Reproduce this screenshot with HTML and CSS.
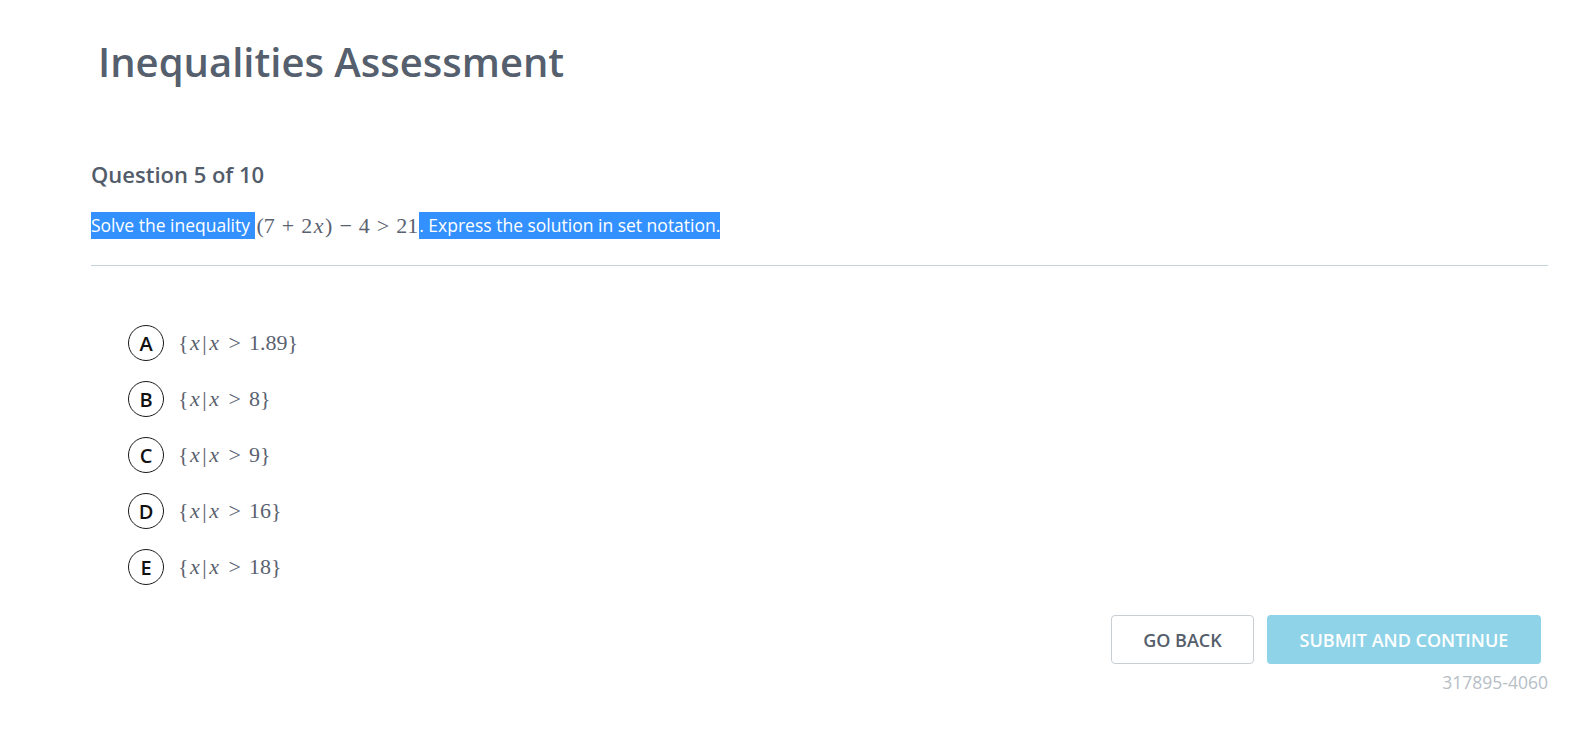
FILE: index.html
```html
<!DOCTYPE html>
<html lang="en">
<head>
<meta charset="utf-8">
<title>Inequalities Assessment</title>
<link rel="stylesheet" href="styles.css">
</head>
<body>
<div class="page">
  <h1 class="title">Inequalities Assessment</h1>
  <section class="question">
    <h2 class="q-count">Question 5 of 10</h2>
    <p class="q-text"><span class="sel">Solve the inequality </span><span class="math"><span>(</span><span>7</span><span class="op">+</span><span>2</span><i>x</i><span>)</span><span class="op">−</span><span>4</span><span class="op">&gt;</span><span>21</span></span><span class="sel">. Express the solution in set notation.</span></p>
  </section>
  <hr class="divider">
  <ul class="options">
    <li class="option"><span class="letter">A</span><span class="math">{<i>x</i><span class="bar">|</span><i>x</i><span class="op">&gt;</span>1.89}</span></li>
    <li class="option"><span class="letter">B</span><span class="math">{<i>x</i><span class="bar">|</span><i>x</i><span class="op">&gt;</span>8}</span></li>
    <li class="option"><span class="letter">C</span><span class="math">{<i>x</i><span class="bar">|</span><i>x</i><span class="op">&gt;</span>9}</span></li>
    <li class="option"><span class="letter">D</span><span class="math">{<i>x</i><span class="bar">|</span><i>x</i><span class="op">&gt;</span>16}</span></li>
    <li class="option"><span class="letter">E</span><span class="math">{<i>x</i><span class="bar">|</span><i>x</i><span class="op">&gt;</span>18}</span></li>
  </ul>
  <div class="actions">
    <button class="btn btn-back">GO BACK</button>
    <button class="btn btn-submit">SUBMIT AND CONTINUE</button>
  </div>
  <div class="item-id">317895-4060</div>
</div>
</body>
</html>
```

FILE: styles.css
```css
html, body {
  margin: 0;
  padding: 0;
  background: #ffffff;
}
body {
  font-family: "Open Sans", "Noto Sans", sans-serif;
  color: #4e5866;
}
.page {
  padding: 34px 30px 0 91px;
}
.title {
  margin: 0;
  padding-left: 7px;
  font-size: 40px;
  line-height: 56px;
  font-weight: 600;
  color: #555f6d;
}
.question {
  margin-top: 69px;
}
.q-count {
  margin: 0;
  font-size: 22px;
  line-height: 30px;
  font-weight: 600;
  color: #525c6a;
}
.q-text {
  margin: 23px 0 0;
  font-size: 17.5px;
  line-height: 27px;
  display: flex;
  align-items: stretch;
}
.sel {
  background: #3390ff;
  color: #ffffff;
  white-space: pre;
}
.math {
  font-family: "Liberation Serif", "DejaVu Serif", serif;
  color: #5a6270;
  font-size: 22px;
  white-space: pre;
}
.q-text .math {
  padding: 0 1px 0 2px;
}
.math i {
  font-style: italic;
  margin: 0 1.5px;
}
.math .op {
  margin: 0 7px;
}
.math .bar {
  margin: 0 1px;
}
.divider {
  margin: 26px 0 0;
  border: 0;
  border-top: 1px solid #c6d3d8;
  height: 0;
}
.options {
  list-style: none;
  margin: 49px 0 0;
  padding: 0 0 0 37px;
}
.option {
  display: flex;
  align-items: center;
  height: 56px;
  gap: 14px;
}
.letter {
  box-sizing: border-box;
  width: 36px;
  height: 36px;
  border: 1.5px solid #1a1a1a;
  border-radius: 50%;
  display: flex;
  align-items: center;
  justify-content: center;
  font-family: "Open Sans", sans-serif;
  font-weight: 600;
  font-size: 20px;
  color: #111111;
}
.option .math .op {
  margin: 0 8px;
}
.actions {
  display: flex;
  justify-content: flex-end;
  gap: 13px;
  margin-top: 20px;
  padding-right: 7px;
}
.btn {
  font-family: "Open Sans", sans-serif;
  font-size: 18px;
  font-weight: 600;
  height: 49px;
  border-radius: 4px;
  cursor: pointer;
}
.btn-back {
  width: 143px;
  background: #ffffff;
  border: 1px solid #c9ced3;
  color: #545e6b;
}
.btn-submit {
  width: 274px;
  background: #8fd3e8;
  border: 0;
  color: #ffffff;
}
.item-id {
  margin-top: 6px;
  text-align: right;
  font-size: 17.5px;
  line-height: 24px;
  color: #b6bec6;
}
```
